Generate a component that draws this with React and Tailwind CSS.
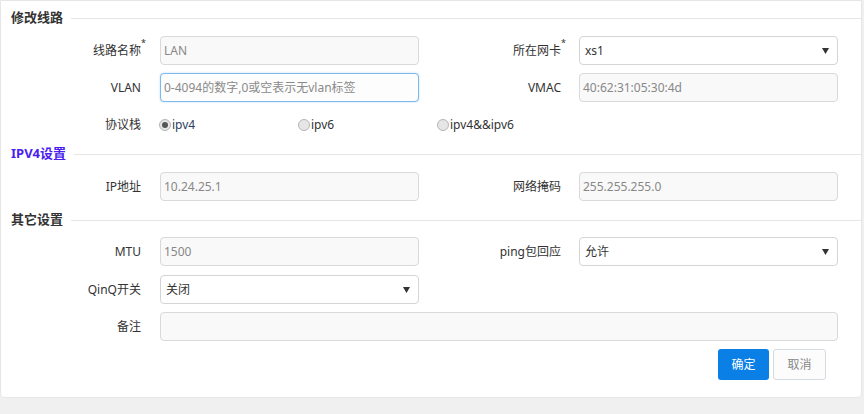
import React, { useState } from "react";

const font = { fontFamily: '"Noto Sans", "Noto Sans CJK SC", sans-serif' };

const SectionTitle = ({ title, color = "text-[#333]" }) => (
  <div className="flex items-center h-[20px]">
    <span className={`pl-[10px] pr-[8px] text-[13px] font-bold ${color}`}>{title}</span>
    <div className="flex-1 h-px bg-[#e6e6e6]"></div>
  </div>
);

const Label = ({ text, required, width = "w-[140px]" }) => (
  <div className={`${width} shrink-0 text-right text-[12px] text-[#333] relative`}>
    {text}
    {required && (
      <span className="absolute -right-[5px] -top-[6px] text-[9px] text-[#333]">*</span>
    )}
  </div>
);

const TextBox = ({ value, placeholder, focus, width = "w-[259px]" }) => (
  <div
    className={`${width} h-[29px] rounded-[4px] border flex items-center px-[3px] text-[12px] ${
      focus
        ? "border-[#7cb9ec] bg-[#fdfdfd] shadow-[0_0_2px_rgba(102,175,233,0.5)]"
        : "border-[#d9d9d9] bg-[#f9f9f9]"
    } ${value ? "text-[#888]" : "text-[#8a8a8a]"}`}>
    {value || placeholder}
  </div>
);

const SelectBox = ({ value }) => (
  <div className="w-[259px] h-[29px] rounded-[4px] border border-[#d4d4d4] bg-white flex items-center justify-between pl-[5px] pr-[8px] text-[12px] text-[#333]">
    <span>{value}</span>
    <svg width="7" height="6" viewBox="0 0 7 6">
      <polygon points="0,0 7,0 3.5,6" fill="#333" />
    </svg>
  </div>
);

const Radio = ({ label, checked, onClick }) => (
  <div className="w-[139px] flex items-center gap-[1px] cursor-pointer" onClick={onClick}>
    <span className="w-[12px] h-[12px] rounded-full border border-[#b5b5b5] bg-[#e6e6e6] flex items-center justify-center">
      {checked && <span className="w-[6px] h-[6px] rounded-full bg-[#555]"></span>}
    </span>
    <span className={`text-[12px] ${checked ? "text-[#2c3e5e]" : "text-[#333]"}`}>{label}</span>
  </div>
);

const App = () => {
  const [stack, setStack] = useState("ipv4");

  return (
    <div className="w-[864px] h-[414px] bg-[#f0f0f0] overflow-hidden" style={font}>
      <div className="w-[862px] bg-white border border-[#e6e6e6] rounded-b-[4px] pt-[7px] pb-[17px]">
        <SectionTitle title="修改线路" />

        <div className="flex items-center mt-[8px]">
          <Label text="线路名称" required />
          <div className="ml-[19px]"><TextBox value="LAN" /></div>
          <Label text="所在网卡" required width="w-[142px]" />
          <div className="ml-[18px]"><SelectBox value="xs1" /></div>
        </div>

        <div className="flex items-center mt-[8px]">
          <Label text="VLAN" />
          <div className="ml-[19px]">
            <TextBox placeholder="0-4094的数字,0或空表示无vlan标签" focus />
          </div>
          <Label text="VMAC" width="w-[142px]" />
          <div className="ml-[18px]"><TextBox value="40:62:31:05:30:4d" /></div>
        </div>

        <div className="flex items-center mt-[13px] h-[20px]">
          <Label text="协议栈" />
          <div className="ml-[18px] flex">
            <Radio label="ipv4" checked={stack === "ipv4"} onClick={() => setStack("ipv4")} />
            <Radio label="ipv6" checked={stack === "ipv6"} onClick={() => setStack("ipv6")} />
            <Radio label="ipv4&&ipv6" checked={stack === "both"} onClick={() => setStack("both")} />
          </div>
        </div>

        <div className="mt-[9px]">
          <SectionTitle title="IPV4设置" color="text-[#4a1df0]" />
        </div>

        <div className="flex items-center mt-[8px]">
          <Label text="IP地址" />
          <div className="ml-[19px]"><TextBox value="10.24.25.1" /></div>
          <Label text="网络掩码" width="w-[142px]" />
          <div className="ml-[18px]"><TextBox value="255.255.255.0" /></div>
        </div>

        <div className="mt-[9px]">
          <SectionTitle title="其它设置" />
        </div>

        <div className="flex items-center mt-[7px]">
          <Label text="MTU" />
          <div className="ml-[19px]"><TextBox value="1500" /></div>
          <Label text="ping包回应" width="w-[142px]" />
          <div className="ml-[18px]"><SelectBox value="允许" /></div>
        </div>

        <div className="flex items-center mt-[9px]">
          <Label text="QinQ开关" />
          <div className="ml-[19px]"><SelectBox value="关闭" /></div>
        </div>

        <div className="flex items-center mt-[8px]">
          <Label text="备注" />
          <div className="ml-[19px]"><TextBox value="" width="w-[678px]" /></div>
        </div>

        <div className="flex justify-end gap-[4px] mt-[8px] pr-[35px]">
          <button className="w-[51px] h-[31px] rounded-[3px] bg-[#0a7fe6] text-white text-[12px]">
            确定
          </button>
          <button className="w-[53px] h-[31px] rounded-[3px] border border-[#d5dbe3] bg-[#fcfcfc] text-[#888] text-[12px]">
            取消
          </button>
        </div>
      </div>
    </div>
  );
};

export default App;
